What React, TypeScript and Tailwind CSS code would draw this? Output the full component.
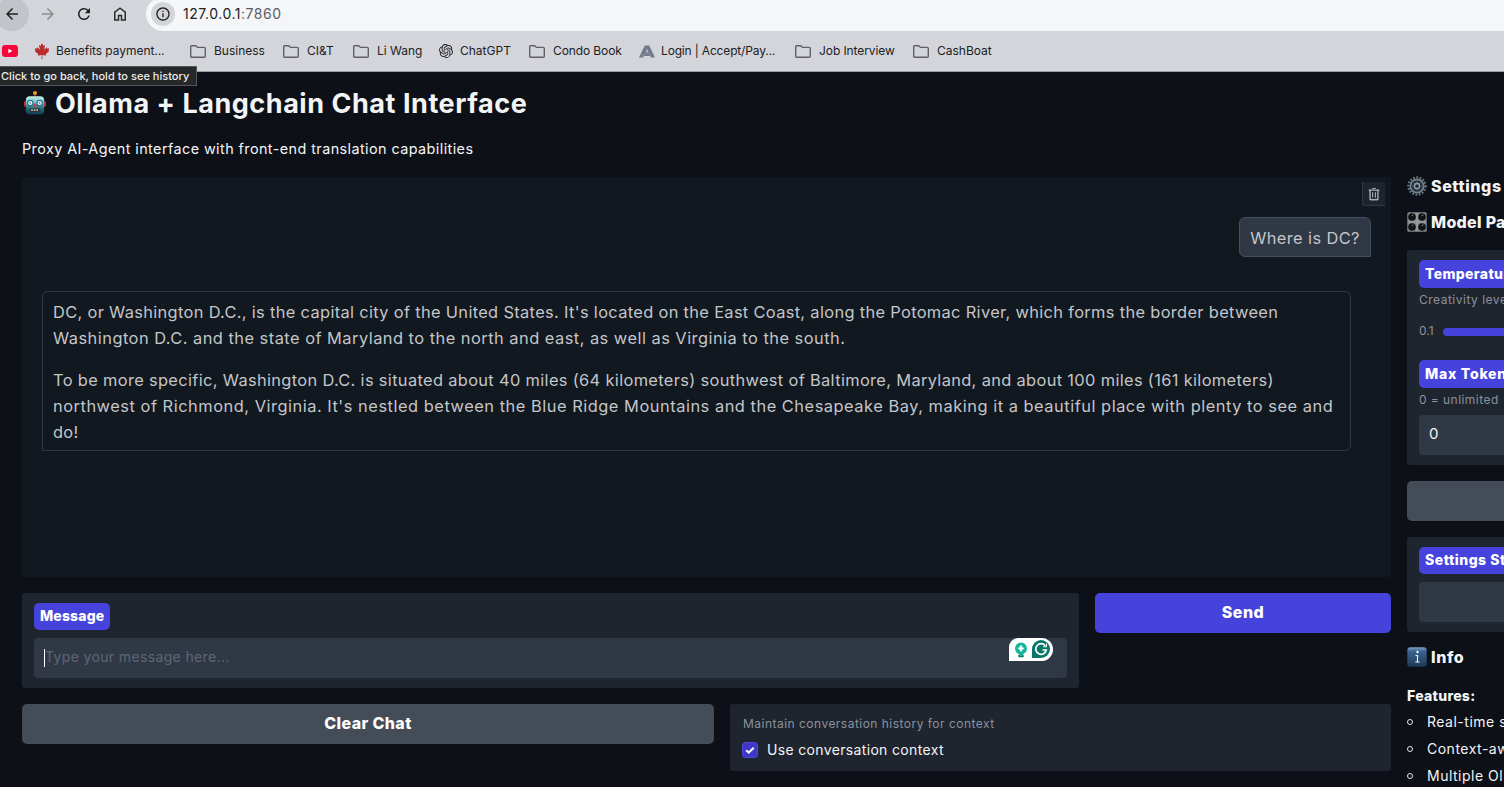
import React from "react";
import { MdArrowBack, MdArrowForward, MdRefresh, MdInfoOutline } from "react-icons/md";
import { SiOpenai } from "react-icons/si";
import { FaCanadianMapleLeaf } from "react-icons/fa";

const Folder = () => (
  <svg className="h-[13px] w-4" viewBox="0 0 16 13" fill="none" stroke="#606166" strokeWidth="1.4">
    <path d="M.7 1.7a1 1 0 0 1 1-1h4.1l1.6 1.7h6.9a1 1 0 0 1 1 1v7.9a1 1 0 0 1-1 1H1.7a1 1 0 0 1-1-1z" />
  </svg>
);

const YouTube = () => (
  <svg className="h-3 w-4" viewBox="0 0 16 12">
    <rect width="16" height="12" rx="3" fill="#f8073a" />
    <path d="M6.4 3.7v4.6L10.4 6z" fill="#fff" />
  </svg>
);

const Home = () => (
  <svg className="size-[18px]" viewBox="0 -960 960 960" fill="#2b2c30">
    <path d="M240-200h120v-240h240v240h120v-360L480-740 240-560v360Zm-80 80v-480l320-240 320 240v480H520v-240h-80v240H160Z" />
  </svg>
);

const AcceptPay = () => (
  <svg className="h-[13px] w-4" viewBox="0 0 16 13">
    <path d="M5.8.6h4.4L16 12.6h-4.2L11 11H5l-.8 1.600H0z" fill="#737988" />
    <path d="M8 3.600 9.600 7.300H6.500z" fill="#b3b7c2" />
    <path d="M2.500 11.600 8 7.600l5 4" fill="none" stroke="#9297a6" />
  </svg>
);

const Robot = () => (
  <svg className="h-6 w-[22px]" viewBox="0 0 22 24">
    <defs>
      <linearGradient id="face" x1="0" y1="0" x2="0" y2="1">
        <stop offset="0" stopColor="#c2f0e8" />
        <stop offset=".35" stopColor="#80b9b7" />
        <stop offset=".65" stopColor="#2f6974" />
        <stop offset="1" stopColor="#0b3c4e" />
      </linearGradient>
    </defs>
    <path d="M11 2v4" stroke="#8d3b17" strokeWidth="1.6" />
    <circle cx="11" cy="2" r="2" fill="#f29a1d" />
    <path d="M0 10.5h2v5H0zM20 10.5h2v5h-2z" fill="#c42430" />
    <rect x="1.8" y="5.2" width="18.4" height="18.4" rx="4" fill="url(#face)" />
    <circle cx="6.3" cy="12" r="3.3" fill="#147b9b" />
    <circle cx="15.7" cy="12" r="3.3" fill="#147b9b" />
    <circle cx="6.3" cy="12" r="2.1" fill="#effcff" />
    <circle cx="15.7" cy="12" r="2.1" fill="#effcff" />
    <circle cx="6.3" cy="12" r=".8" fill="#33565f" />
    <circle cx="15.7" cy="12" r=".8" fill="#33565f" />
    <path d="m11 12 2 3.3H9z" fill="#e02b2d" />
    <rect x="5.8" y="17.5" width="10.4" height="3.4" rx="1" fill="#28383e" />
    <path d="M7.2 19.2h7.8" stroke="#c5b9a7" strokeWidth="1.8" strokeDasharray="1.6 1" />
  </svg>
);

const Gear = () => (
  <svg className="size-5" viewBox="0 0 20 20" fill="none">
    <circle cx="10" cy="10" r="8.6" stroke="#6b7882" strokeWidth="2.2" strokeDasharray="1.7 1.6" />
    <circle cx="10" cy="10" r="6.6" stroke="#71808b" strokeWidth="2" />
    <circle cx="10" cy="10" r="5.2" fill="#26343f" />
    <path d="M10 5v10M5 10h10M6.500 6.500l7 7M13.500 6.500l-7 7" stroke="#596873" strokeWidth=".8" />
    <circle cx="10" cy="10" r="2.500" fill="#1b2731" stroke="#94a4b0" strokeWidth="1.300" />
  </svg>
);

const Knob = ({ x, y }: { x: number; y: number }) => (
  <g>
    <circle cx={x} cy={y} r="3.800" fill="#101214" />
    <path d={`M${x} ${y - 1}l1.200-1.400`} stroke="#c8cacb" strokeWidth=".7" />
  </g>
);

const Knobs = () => (
  <svg className="size-5" viewBox="0 0 20 20">
    <rect x=".3" y=".3" width="19.400" height="19.400" rx="1.500" fill="#85888b" />
    <path d="M10 1v18M1 10h18" stroke="#a0a3a5" strokeWidth="1.200" />
    <Knob x={5} y={5} />
    <Knob x={15} y={5} />
    <Knob x={5} y={15} />
    <Knob x={15} y={15} />
  </svg>
);

const Info = () => (
  <svg className="size-5" viewBox="0 0 20 20">
    <defs>
      <linearGradient id="tile" x1="0" y1="0" x2="0" y2="1">
        <stop offset="0" stopColor="#7ba3c6" />
        <stop offset=".2" stopColor="#39658f" />
        <stop offset="1" stopColor="#1d3957" />
      </linearGradient>
    </defs>
    <rect x=".3" y=".3" width="19.4" height="19.4" rx="3" fill="url(#tile)" />
    <circle cx="10.500" cy="5" r="1.200" fill="#f2f5f8" />
    <path d="M8.500 8.500h2V15M8.300 15h4.400" stroke="#f2f5f8" strokeWidth="1.100" fill="none" />
  </svg>
);

const Trash = () => (
  <svg className="size-[14px]" viewBox="0 0 32 32" fill="#cfd1d5">
    <path d="M12 12h2v12h-2zM18 12h2v12h-2zM12 2h8v2h-8z" />
    <path d="M4 6v2h2v20a2 2 0 0 0 2 2h16a2 2 0 0 0 2-2V8h2V6Zm4 22V8h16v20Z" stroke="#cfd1d5" strokeWidth=".5" />
  </svg>
);

const Grammarly = () => (
  <svg className="h-[23px] w-11" viewBox="0 0 44 23">
    <path d="M0 23V9a9 9 0 0 1 9-9h23.500a11.500 11.500 0 0 1 0 23z" fill="#fff" />
    <circle cx="12" cy="10.400" r="6" fill="#15b79b" />
    <path d="M9 14h6l-1 3h-4z" fill="#15b79b" />
    <path d="M12 7.300l1 2.100 2.100 1-2.100 1-1 2.100-1-2.100-2.100-1 2.100-1z" fill="#fff" stroke="#fff" strokeWidth=".8" />
    <path d="M9 17.300h6v.7a1.500 1.500 0 0 1-1.500 1.300h-3A1.500 1.500 0 0 1 9 18z" fill="#087a68" />
    <path d="M23 20v-9a9 9 0 1 1 9 9z" fill="#087766" />
    <path d="M36.300 7.800A5.300 5.300 0 1 0 37.300 12H33.500" fill="none" stroke="#fff" strokeWidth="1.700" />
    <path d="M37.500 5.500v3.300h-3.300" fill="none" stroke="#fff" strokeWidth="1" />
  </svg>
);

function Bookmark({ icon, label, cls, gap = "ml-2" }: { icon: React.ReactNode; label: string; cls: string; gap?: string }) {
  return (
    <div className={`flex shrink-0 items-center whitespace-nowrap ${cls}`}>
      {icon}
      <span className={gap}>{label}</span>
    </div>
  );
}

const Pill = ({ children, cls = "" }: { children: React.ReactNode; cls?: string }) => (
  <div className={`flex w-fit items-center whitespace-nowrap rounded-[5px] bg-[#4543dc] px-1.5 pb-px text-sm font-extrabold text-white ${cls}`}>{children}</div>
);

export default function App() {
  return (
    <div className="relative flex h-[787px] w-[1504px] flex-col overflow-hidden bg-[#0d1017] font-['Inter',sans-serif] text-[#f3f4f6]">
      <header className="h-[72px] shrink-0 border-b border-[#9b9ca1] bg-[#d4d5da] text-[#202124]">
        <div className="flex h-[31px] items-start overflow-hidden">
          <div className="-ml-[5px] -mt-[3px] flex size-[34px] shrink-0 items-center justify-center rounded-full bg-[#c3c4c9]">
            <MdArrowBack className="size-[18px]" />
          </div>
          <div className="ml-[10px] flex h-7 w-[107px] shrink-0 items-center gap-[18px]">
            <MdArrowForward className="size-[18px] text-[#8b8c90]" />
            <MdRefresh className="size-[18px]" />
            <Home />
          </div>
          <div className="-mt-[3px] flex h-[34px] flex-1 items-center rounded-l-full bg-[#f5f6f8] pl-[5px]">
            <div className="flex size-6 items-center justify-center rounded-full bg-[#d4d5da]">
              <MdInfoOutline className="size-4" />
            </div>
            <span className="ml-2 text-sm tracking-[0.53px]">127.0.0.1<span className="text-[#5b5d62]">:7860</span></span>
          </div>
        </div>
        <div className="flex h-10 items-center pl-0.5 text-xs">
          <div className="w-8 shrink-0"><YouTube /></div>
          <Bookmark cls="w-[156px]" gap="ml-1.5 tracking-[-0.05px]" icon={<FaCanadianMapleLeaf className="size-4 text-[#b92b2d]" />} label="Benefits payment..." />
          <Bookmark cls="w-[93px]" icon={<Folder />} label="Business" />
          <Bookmark cls="w-[70px]" icon={<Folder />} label="CI&T" />
          <Bookmark cls="w-[86px]" icon={<Folder />} label="Li Wang" />
          <Bookmark cls="w-[90px]" gap="ml-[7px]" icon={<SiOpenai className="size-[14px]" />} label="ChatGPT" />
          <Bookmark cls="w-[110px]" gap="ml-2 tracking-[-0.1px]" icon={<Folder />} label="Condo Book" />
          <Bookmark cls="w-[156px]" gap="ml-1.5 tracking-[-0.16px]" icon={<AcceptPay />} label="Login | Accept/Pay..." />
          <Bookmark cls="w-[118px]" gap="ml-2 tracking-[-0.08px]" icon={<Folder />} label="Job Interview" />
          <Bookmark cls="w-20" icon={<Folder />} label="CashBoat" />
        </div>
      </header>
      <div className="absolute left-0 top-[66px] flex h-5 w-[197px] items-center whitespace-nowrap border border-l-0 border-[#56575a] bg-[#262729] pl-px text-[11px] font-medium tracking-[0.02px] text-[#ececec]">
        Click to go back, hold to see history
      </div>

      <div className="flex flex-1 gap-4 overflow-hidden pl-[22px]">
        <main className="w-[1369px] shrink-0">
          <div className="flex h-[105px] flex-col">
            <h1 className="mt-3.5 flex h-9 items-center whitespace-nowrap text-[27px] font-bold">
              <span className="mb-[3px] ml-0.5 mr-[9px]"><Robot /></span>
              <span className="pt-px tracking-[0.54px]">Ollama + Langchain Chat Interface</span>
            </h1>
            <p className="mt-[17px] whitespace-nowrap text-[14.4px] leading-5 tracking-[0.42px]">Proxy AI-Agent interface with front-end translation capabilities</p>
          </div>

          <section className="h-[400px] rounded-[3px] bg-[#111820] px-5 pt-[5px] text-[16.4px] text-[#c4c6c9]">
            <div className="-mr-3.5 flex justify-end">
              <button className="flex h-6 w-[23px] items-center justify-center rounded-bl-[3px] border-b border-l border-[#303844] bg-[#1c242e]"><Trash /></button>
            </div>
            <div className="mt-[11px] flex justify-end">
              <div className="flex h-10 w-[132px] items-center justify-center whitespace-nowrap rounded-md rounded-br-none border border-[#454e5b] bg-[#303846] pt-0.5 tracking-[0.4px]">Where is DC?</div>
            </div>
            <div className="mt-[34px] h-40 w-[1309px] whitespace-nowrap rounded-md rounded-bl-none border border-[#303844] px-2.5 pt-[7px] leading-[26px]">
              <p>
                <span className="block tracking-[0.335px]">DC, or Washington D.C., is the capital city of the United States. It's located on the East Coast, along the Potomac River, which forms the border between</span>
                <span className="block tracking-[0.48px]">Washington D.C. and the state of Maryland to the north and east, as well as Virginia to the south.</span>
              </p>
              <p className="mt-4">
                <span className="block tracking-[0.345px]">To be more specific, Washington D.C. is situated about 40 miles (64 kilometers) southwest of Baltimore, Maryland, and about 100 miles (161 kilometers)</span>
                <span className="block tracking-[0.525px]">northwest of Richmond, Virginia. It's nestled between the Blue Ridge Mountains and the Chesapeake Bay, making it a beautiful place with plenty to see and</span>
                <span className="block tracking-[0.3px]">do!</span>
              </p>
            </div>
          </section>

          <div className="mt-4 flex items-start gap-4">
            <section className="h-[95px] w-[1057px] rounded-[3px] bg-[#1e252f] px-3 pt-2.5">
              <Pill cls="h-[27px] tracking-[0.15px]">Message</Pill>
              <div className="mt-2 flex h-10 items-start rounded bg-[#303846] pl-2.5 pr-[14px] text-sm">
                <span className="mt-[11px] h-[18px] w-px bg-white" />
                <span className="flex-1 whitespace-nowrap leading-[38px] tracking-[0.36px] text-[#5d6673]">Type your message here...</span>
                <Grammarly />
              </div>
            </section>
            <button className="h-10 w-[296px] rounded-[5px] bg-[#4543dc] pb-0.5 text-base font-extrabold tracking-[0.5px] text-white">Send</button>
          </div>

          <div className="mt-4 flex items-start gap-4">
            <button className="h-10 w-[692px] rounded-[5px] bg-[#434c57] pb-0.5 text-base font-extrabold tracking-[0.4px] text-white">Clear Chat</button>
            <section className="h-[67px] w-[661px] rounded-[3px] bg-[#1e252f] px-3 pt-2.5">
              <p className="pl-px text-xs leading-[19px] tracking-[0.48px] text-[#8b919d]">Maintain conversation history for context</p>
              <label className="mt-[7px] flex h-5 items-center text-sm">
                <svg className="size-4" viewBox="0 0 16 16">
                  <rect x=".5" y=".5" width="15" height="15" rx="3" fill="#3f37c5" stroke="#4e49e5" />
                  <path d="m4.200 8.300 2.500 2.400 5-5" fill="none" stroke="#fff" strokeWidth="2" />
                </svg>
                <span className="ml-[9px] tracking-[0.34px]">Use conversation context</span>
              </label>
            </section>
          </div>
        </main>

        <aside className="w-[300px] shrink-0 whitespace-nowrap">
          <h3 className="mt-[104px] flex h-5 items-center gap-1 text-base font-extrabold tracking-[0.6px]"><Gear /><span>Settings</span></h3>
          <h3 className="mt-4 flex h-5 items-center gap-1 text-base font-extrabold tracking-[0.3px]"><Knobs /><span>Model Parameters</span></h3>
          <section className="mt-[18px] h-[215px] rounded-[3px] bg-[#1e252f] px-3 pt-2.5">
            <Pill cls="h-7 pb-0.5 tracking-[0.35px]">Temperature</Pill>
            <p className="mt-0.5 text-xs leading-5 tracking-[0.5px] text-[#8b919d]">Creativity level</p>
            <div className="mt-[11px] flex h-5 items-center text-xs text-[#8b919d]">
              <span className="w-6">0.1</span>
              <div className="mt-px h-2 w-[200px] rounded-full bg-[#4543dc]" />
            </div>
            <div className="mt-[19px]"><Pill cls="h-7 pb-0.5 tracking-[0.75px]">Max Tokens</Pill></div>
            <p className="mt-0.5 text-xs leading-5 tracking-[0.45px] text-[#8b919d]">0 = unlimited</p>
            <div className="mt-[5px] h-10 rounded bg-[#303846] pl-2.5 text-[15px] leading-[38px]">0</div>
          </section>
          <button className="mt-4 block h-10 w-full rounded-[5px] bg-[#434c57]" />
          <section className="mt-4 h-[95px] rounded-[3px] bg-[#1e252f] px-3 pt-2.5">
            <Pill cls="h-[27px] tracking-[0.5px]">Settings Status</Pill>
            <div className="mt-2 h-10 rounded bg-[#303846]" />
          </section>
          <h3 className="mt-[15px] flex h-5 items-center gap-1 text-base font-extrabold tracking-[0.6px]"><Info /><span>Info</span></h3>
          <p className="mt-[19px] text-sm font-extrabold leading-5 tracking-[0.3px]">Features:</p>
          <ul className="mt-0.5 text-sm leading-[27px] tracking-[0.5px]">
            {["Real-time streaming", "Context-aware chat", "Multiple Ollama models"].map((t) => (
              <li key={t} className="flex items-center">
                <span className="mr-[14px] size-1.5 rounded-full border border-[#e5e7eb]" />
                <span>{t}</span>
              </li>
            ))}
          </ul>
        </aside>
      </div>
    </div>
  );
}
